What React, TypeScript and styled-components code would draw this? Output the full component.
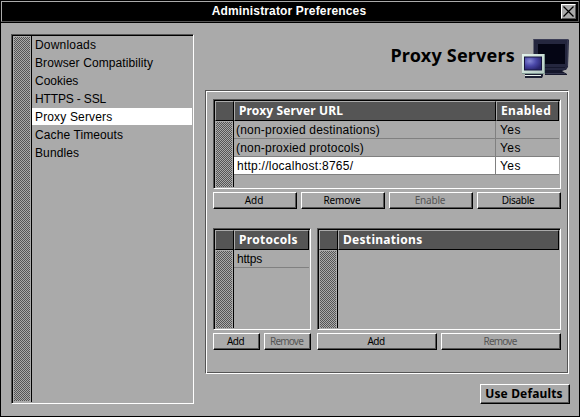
import React from "react";
import styled, { createGlobalStyle } from "styled-components";

const GREY = "#aaaaaa";
const DARK = "#555555";
const LINE = "#808080";
const HUMANIST = `"Noto Sans", "Open Sans", sans-serif`;
const GROTESQUE = `"Liberation Sans", Arial, sans-serif`;

const GlobalStyle = createGlobalStyle`
  * { box-sizing: border-box; }
  html, body { margin: 0; padding: 0; }
  button { appearance: none; border-radius: 0; margin: 0; padding: 0; }
`;

const Window = styled.div`
  width: 580px;
  height: 417px;
  display: flex;
  flex-direction: column;
  border: 1px solid #000;
  background: ${GREY};
  color: #000;
  font: 12px ${GROTESQUE};
  overflow: hidden;
  white-space: nowrap;
`;

const TitleBar = styled.header`
  flex: none;
  height: 21px;
  margin-bottom: 1px;
  display: grid;
  grid-template-columns: 1fr auto 1fr;
  background: #000;
  border: 1px solid;
  border-color: ${GREY} ${DARK} ${DARK} ${GREY};
  box-shadow: 0 1px 0 #000;
`;

const TitleText = styled.h1`
  grid-column: 2;
  margin: 0 2px 0 0;
  color: #fff;
  font: bold 12px/19px ${GROTESQUE};
  letter-spacing: 0.15px;
`;

const CloseButton = styled.button`
  justify-self: end;
  width: 15px;
  height: 15px;
  margin: 2px 2px 0 0;
  display: grid;
  place-items: center;
  background: ${GREY};
  border: 1px solid;
  border-color: #fff ${DARK} ${DARK} #fff;
`;

const Body = styled.main`
  flex: 1;
  display: flex;
  gap: 11px;
  padding: 11px 9px 12px 10px;
`;

const Sunken = styled.div`
  border: 1px solid;
  border-color: ${DARK} #fff #fff ${DARK};
  box-shadow: inset 1px 1px 0 #000;
  padding: 1px 1px 0 1px;
  display: flex;
`;

const Stripes = styled.div`
  flex: none;
  width: 16px;
  background: repeating-conic-gradient(${DARK} 0 25%, ${GREY} 0 50%) 0 0 / 2px 2px;
`;

const Sidebar = styled(Sunken)`
  width: 183px;
  height: 370px;

  & > ${Stripes} {
    margin: 1px 1px 2px 1px;
  }
`;

const SideList = styled.ul`
  flex: 1;
  margin: 0 0 1px;
  padding: 0;
  list-style: none;
  border-left: 1px solid #000;
  display: flex;
  flex-direction: column;
  gap: 1px;
`;

const SideItem = styled.li<{ $selected?: boolean; $track?: number }>`
  height: 17px;
  padding-left: 3px;
  line-height: 18px;
  letter-spacing: ${(p) => p.$track ?? 0.1}px;
  background: ${(p) => (p.$selected ? "#fff" : "transparent")};
`;

const Pane = styled.section`
  width: 364px;
  display: flex;
  flex-direction: column;
`;

const Heading = styled.div`
  height: 56px;
  display: flex;
  justify-content: flex-end;
  gap: 6px;
`;

const HeadingText = styled.h2`
  margin: 0;
  padding-top: 7px;
  font: bold 18px/28px ${HUMANIST};
  letter-spacing: 0.2px;
`;

const Group = styled.div`
  height: 284px;
  padding: 8px 7px 0;
  border: 1px solid;
  border-color: ${DARK} #fff #fff ${DARK};
  box-shadow: inset 1px 1px 0 #fff, inset -1px -1px 0 ${DARK};
`;

const Columns = styled.div`
  display: flex;
  gap: 6px;
  margin-top: 19px;
`;

const Column = styled.div<{ $width: number }>`
  width: ${(p) => p.$width}px;
`;

const Table = styled(Sunken)<{ $height: number }>`
  height: ${(p) => p.$height}px;
`;

const TableInner = styled.div`
  flex: 1;
  display: flex;
  flex-direction: column;
`;

const HeadRow = styled.div`
  flex: none;
  height: 20px;
  display: flex;
`;

const HeadCell = styled.div<{ $width?: number; $track?: number }>`
  ${(p) => (p.$width ? `width: ${p.$width}px;` : "flex: 1;")}
  padding-left: 4px;
  background: ${DARK};
  color: #fff;
  font: bold 12px/17px ${HUMANIST};
  letter-spacing: ${(p) => p.$track ?? 0.3}px;
  border: 1px solid;
  border-color: ${GREY} #000 #000 ${GREY};
`;

const TableBody = styled.div`
  flex: 1;
  display: flex;
  padding: 1px 0 1px 1px;

  & > ${Stripes} {
    margin-right: 1px;
  }
`;

const Rows = styled.div`
  flex: 1;
  border-left: 1px solid #000;
  margin-top: -1px;
`;

const Row = styled.div<{ $selected?: boolean }>`
  height: 18px;
  display: flex;
  border-bottom: 1px solid ${LINE};
  line-height: 18px;
  background: ${(p) => (p.$selected ? "#fff" : "transparent")};
`;

const Cell = styled.div<{ $indent?: number; $track?: number }>`
  flex: 1;
  padding-left: ${(p) => p.$indent ?? 3}px;
  letter-spacing: ${(p) => p.$track ?? 0.15}px;
`;

const StatusCell = styled.div`
  width: 64px;
  padding-left: 4px;
  border-left: 1px solid ${LINE};
  letter-spacing: 0.4px;
`;

const Buttons = styled.div`
  display: flex;
  gap: 4px;
  margin-top: 3px;
`;

const Button = styled.button<{ $track?: number }>`
  flex: 1;
  height: 17px;
  padding-right: 2px;
  background: ${GREY};
  border: 1px solid;
  border-color: #fff #000 #000 #fff;
  box-shadow: inset -1px -1px 0 ${DARK};
  font: 10px/13px ${HUMANIST};
  letter-spacing: ${(p) => p.$track ?? -0.2}px;
  color: #000;
  text-align: center;

  &:disabled {
    color: ${DARK};
  }
`;

const DefaultsButton = styled(Button)`
  flex: none;
  align-self: flex-end;
  width: 90px;
  height: 20px;
  margin: 10px -1px 0 0;
  font: bold 12px/16px ${HUMANIST};
  letter-spacing: 0.15px;
`;

const CloseGlyph = () => (
  <svg width="11" height="11" viewBox="0 0 11 11">
    <path d="M.5 .5 10.5 10.5M10.5 .5 .5 10.5" stroke="#000" strokeWidth="1.3" />
  </svg>
);

const Monitors = () => (
  <svg width="48" height="46" viewBox="0 0 48 46">
    <defs>
      <radialGradient id="glow" cx=".3" cy=".3" r=".8">
        <stop offset="0" stopColor="#8588d4" />
        <stop offset=".5" stopColor="#4a48a8" />
        <stop offset="1" stopColor="#28246c" />
      </radialGradient>
      <linearGradient id="shell" x1="0" y1="0" x2="1" y2="1">
        <stop offset="0" stopColor="#e4f4ec" />
        <stop offset="1" stopColor="#b4c9c2" />
      </linearGradient>
    </defs>
    <path d="M24 35h19l1 1-3 1 5 3v1H24z" fill="#15172c" />
    <path d="M24 39.500h20" stroke="#34364e" />
    <path d="M12.500 5h34.500l1 1-1 27-2 3H12.500z" fill="#25273f" />
    <path d="M12.500 5.500h34.500" stroke="#3c3e56" />
    <path d="M46.500 6v26" stroke="#34364e" />
    <path d="M17 10h27v20H17z" fill="#040514" />
    <path d="M14 33.500h30" stroke="#15172c" />
    <path d="M4 40h18v2l-1 2H4z" fill="#1d1f33" />
    <path d="M4 41.500h16" stroke="#e9f2ee" />
    <path d="M1 20h23v20H1z" fill="url(#shell)" />
    <path d="M1 39.500h22.500V20" fill="none" stroke="#829b94" />
    <path d="M3 22.500h18v14H3z" fill="#17163f" />
    <path d="M4 23.500h16v12H4z" fill="url(#glow)" />
  </svg>
);

const sections: { label: string; track?: number }[] = [
  { label: "Downloads", track: 0.2 },
  { label: "Browser Compatibility" },
  { label: "Cookies", track: 0 },
  { label: "HTTPS - SSL", track: -0.15 },
  { label: "Proxy Servers", track: 0.15 },
  { label: "Cache Timeouts" },
  { label: "Bundles", track: 0.1 },
];

const servers = [
  { url: "(non-proxied destinations)", track: 0.2, indent: 2 },
  { url: "(non-proxied protocols)", track: 0.2, indent: 2 },
  { url: "http://localhost:8765/", track: 0.25, indent: 3 },
];

export default function App() {
  return (
    <>
      <GlobalStyle />
      <Window>
        <TitleBar>
          <TitleText>Administrator Preferences</TitleText>
          <CloseButton aria-label="Close">
            <CloseGlyph />
          </CloseButton>
        </TitleBar>
        <Body>
          <Sidebar>
            <Stripes />
            <SideList>
              {sections.map((s) => (
                <SideItem key={s.label} $track={s.track} $selected={s.label === "Proxy Servers"}>
                  {s.label}
                </SideItem>
              ))}
            </SideList>
          </Sidebar>
          <Pane>
            <Heading>
              <HeadingText>Proxy Servers</HeadingText>
              <Monitors />
            </Heading>
            <Group>
              <Table $height={90}>
                <TableInner>
                  <HeadRow>
                    <HeadCell $width={19} />
                    <HeadCell $track={0.13}>Proxy Server URL</HeadCell>
                    <HeadCell $width={63} $track={0.35}>Enabled</HeadCell>
                  </HeadRow>
                  <TableBody>
                    <Stripes />
                    <Rows>
                      {servers.map((s, i) => (
                        <Row key={s.url} $selected={i === 2}>
                          <Cell $track={s.track} $indent={s.indent}>{s.url}</Cell>
                          <StatusCell>Yes</StatusCell>
                        </Row>
                      ))}
                    </Rows>
                  </TableBody>
                </TableInner>
              </Table>
              <Buttons>
                <Button $track={0}>Add</Button>
                <Button $track={-0.1}>Remove</Button>
                <Button disabled $track={-0.2}>Enable</Button>
                <Button $track={-0.3}>Disable</Button>
              </Buttons>
              <Columns>
                <Column $width={98}>
                  <Table $height={102}>
                    <TableInner>
                      <HeadRow>
                        <HeadCell $width={19} />
                        <HeadCell>Protocols</HeadCell>
                      </HeadRow>
                      <TableBody>
                        <Stripes />
                        <Rows>
                          <Row>
                            <Cell $track={-0.2}>https</Cell>
                          </Row>
                        </Rows>
                      </TableBody>
                    </TableInner>
                  </Table>
                  <Buttons>
                    <Button $track={-0.6}>Add</Button>
                    <Button disabled $track={-0.8}>Remove</Button>
                  </Buttons>
                </Column>
                <Column $width={244}>
                  <Table $height={102}>
                    <TableInner>
                      <HeadRow>
                        <HeadCell $width={19} />
                        <HeadCell>Destinations</HeadCell>
                      </HeadRow>
                      <TableBody>
                        <Stripes />
                        <Rows />
                      </TableBody>
                    </TableInner>
                  </Table>
                  <Buttons>
                    <Button $track={-0.6}>Add</Button>
                    <Button disabled $track={-0.8}>Remove</Button>
                  </Buttons>
                </Column>
              </Columns>
            </Group>
            <DefaultsButton>Use Defaults</DefaultsButton>
          </Pane>
        </Body>
      </Window>
    </>
  );
}
